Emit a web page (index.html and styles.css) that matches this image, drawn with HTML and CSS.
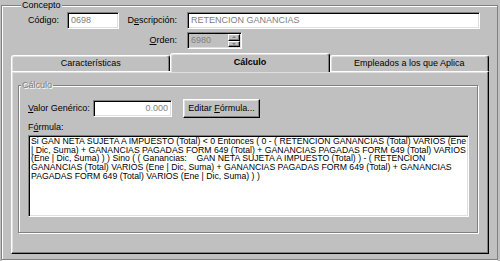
FILE: index.html
```html
<!DOCTYPE html>
<html lang="es">
<head>
	<meta charset="utf-8" />
	<title>Concepto</title>
	<link rel="stylesheet" href="styles.css">
</head>
<body>
<fieldset class="group concepto">
	<legend>Concepto</legend>
	<div class="fields">
		<label class="lbl">Código:</label>
		<span class="edit">0698</span>
		<label class="lbl">D<u>e</u>scripción:</label>
		<span class="edit">RETENCION GANANCIAS</span>
		<label class="lbl orden-lbl"><u>O</u>rden:</label>
		<span class="edit spin">
			<span class="spin-val">6980</span>
			<span class="spin-btns">
				<span class="spin-btn"><i class="arrow up"></i></span>
				<span class="spin-btn"><i class="arrow down"></i></span>
			</span>
		</span>
	</div>

	<div class="tabs">
		<div class="tab">Características</div>
		<div class="tab active">Cálculo</div>
		<div class="tab">Empleados a los que Aplica</div>
	</div>

	<div class="panel">
		<fieldset class="group calc">
			<legend class="disabled">Cálculo</legend>
			<div class="valor-row">
				<label class="lbl valor-lbl"><u>V</u>alor Genérico:</label>
				<span class="edit num">0.000</span>
				<span class="btn">Editar <u>F</u>órmula...</span>
			</div>
			<div class="lbl formula-lbl">F<u>ó</u>rmula:</div>
			<div class="formula">Si GAN NETA SUJETA A IMPUESTO (Total) &lt; 0 Entonces ( 0 - ( RETENCION GANANCIAS (Total) VARIOS (Ene<br>| Dic, Suma) + GANANCIAS PAGADAS FORM 649 (Total) + GANANCIAS PAGADAS FORM 649 (Total) VARIOS<br>(Ene | Dic, Suma) ) ) Sino ( ( Ganancias:&nbsp;&nbsp;&nbsp; GAN NETA SUJETA A IMPUESTO (Total) ) - ( RETENCION<br>GANANCIAS (Total) VARIOS (Ene | Dic, Suma) + GANANCIAS PAGADAS FORM 649 (Total) + GANANCIAS<br>PAGADAS FORM 649 (Total) VARIOS (Ene | Dic, Suma) ) )</div>
		</fieldset>
	</div>
</fieldset>
</body>
</html>
```

FILE: styles.css
```css
*{
	box-sizing:border-box;
}

body{
	margin:0 2px 0 1px;
	background-color:#c0c0c0;
	font-family:"Liberation Sans", Arial, sans-serif;
	font-size:9px;
	color:#000;
	height:261px;
	overflow:hidden;
}

u{
	text-decoration-thickness:1px;
	text-underline-offset:1px;
}

/* etched group box */
.group{
	margin:0;
	min-width:0;
	border:1px solid #808080;
	box-shadow:inset 1px 1px #fff, 1px 1px #fff;
}

.group legend{
	padding:0 1px;
	line-height:11px;
	background-color:#c0c0c0;
}

.concepto{
	height:260px;
	padding:1px 8px 0 9px;
}

.concepto legend{
	margin-left:10px;
}

.fields{
	display:grid;
	grid-template-columns:56px 52px 68px 293px;
	grid-auto-rows:17px;
	row-gap:3px;
	align-items:center;
}

.lbl{
	text-align:right;
	padding-right:8px;
	line-height:11px;
}

.fields .lbl:nth-of-type(2), .orden-lbl{
	padding-right:10px;
}

.orden-lbl{
	grid-column:3;
}

/* sunken edit box */
.edit{
	display:block;
	height:17px;
	padding:0 3px;
	line-height:15px;
	color:#808080;
	background-color:#fff;
	border-style:solid;
	border-width:1px;
	border-color:#808080 #fff #fff #808080;
	box-shadow:inset 1px 1px #000, inset -1px -1px #dfdfdf;
	white-space:nowrap;
	overflow:hidden;
}

.spin{
	width:55px;
	display:flex;
	padding:1px 1px 1px 3px;
	background-color:#c0c0c0;
}

.spin-val{
	flex:1;
	line-height:13px;
}

.spin-btns{
	width:12px;
	display:flex;
	flex-direction:column;
}

.spin-btn{
	flex:1;
	display:flex;
	align-items:center;
	justify-content:center;
	background-color:#c0c0c0;
	border-style:solid;
	border-width:1px;
	border-color:#fff #000 #000 #fff;
	box-shadow:inset -1px -1px #808080;
}

.arrow{
	width:0;
	height:0;
	border-left:2px solid transparent;
	border-right:2px solid transparent;
}

.arrow.up{
	border-bottom:2px solid #808080;
}

.arrow.down{
	border-top:2px solid #808080;
}

/* tabs */
.tabs{
	display:flex;
	margin-top:6px;
	height:16px;
}

.tab{
	flex:1;
	height:16px;
	line-height:15px;
	text-align:center;
	border-top:1px solid #fff;
	border-left:1px solid #fff;
	border-right:1px solid #000;
	border-radius:3px 3px 0 0;
	box-shadow:inset -1px 0 #808080, inset 1px 1px #dfdfdf;
	background-color:#c0c0c0;
}

.tab.active{
	position:relative;
	z-index:1;
	margin-top:-2px;
	height:19px;
	line-height:17px;
	font-weight:bold;
}

.panel{
	height:183px;
	padding:8px 10px 0 6px;
	border-style:solid;
	border-width:1px;
	border-color:#fff #000 #000 #fff;
	box-shadow:inset -1px -1px #808080, inset 1px 1px #dfdfdf;
}

.calc{
	padding:8px 8px 15px 9px;
}

.calc legend{
	margin-left:-7px;
}

.disabled{
	color:#808080;
	text-shadow:1px 1px #fff;
}

.valor-row{
	display:flex;
	align-items:center;
	height:19px;
}

.valor-lbl{
	width:65px;
	text-align:left;
	padding:0;
}

.num{
	width:79px;
	text-align:right;
}

.btn{
	margin-left:11px;
	width:77px;
	height:19px;
	line-height:17px;
	text-align:center;
	border-style:solid;
	border-width:1px;
	border-color:#fff #000 #000 #fff;
	box-shadow:inset -1px -1px #808080, inset 1px 1px #dfdfdf;
	white-space:nowrap;
}

.formula-lbl{
	text-align:left;
	margin-top:4px;
	padding:0;
}

.formula{
	margin-top:2px;
	height:82px;
	padding:1px 2px;
	font-size:8.7px;
	line-height:8.7px;
	background-color:#fff;
	border-style:solid;
	border-width:1px;
	border-color:#808080 #fff #fff #808080;
	box-shadow:inset 1px 1px #000, inset -1px -1px #dfdfdf;
	white-space:nowrap;
	overflow:hidden;
}
```
